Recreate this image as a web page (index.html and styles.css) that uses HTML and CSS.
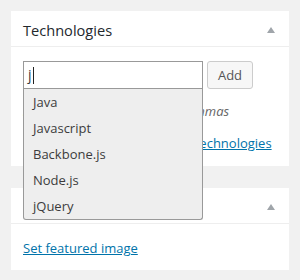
FILE: index.html
```html
<!DOCTYPE html>
<html>
<head>
<meta charset="utf-8">
<link rel="stylesheet" href="styles.css">
</head>
<body>
<div class="page">
  <div class="panel">
    <div class="panel-head">
      <h2 class="panel-title">Technologies</h2>
      <span class="toggle"></span>
    </div>
    <div class="panel-body tags-body">
      <div class="add-row">
        <div class="field">
          <div class="tag-input">j<span class="caret"></span></div>
          <ul class="suggest">
            <li>Java</li>
            <li>Javascript</li>
            <li>Backbone.js</li>
            <li>Node.js</li>
            <li>jQuery</li>
          </ul>
        </div>
        <button class="btn">Add</button>
      </div>
      <p class="howto">Separate technologies with commas</p>
      <p class="choose"><a href="#">Choose from the most used technologies</a></p>
    </div>
  </div>
  <div class="panel">
    <div class="panel-head">
      <h2 class="panel-title"></h2>
      <span class="toggle"></span>
    </div>
    <div class="panel-body image-body">
      <a href="#">Set featured image</a>
    </div>
  </div>
</div>
</body>
</html>
```
FILE: styles.css
```css
html, body {
  margin: 0;
  padding: 0;
  background: #f1f1f1;
  font-family: "Open Sans", "Liberation Sans", sans-serif;
  font-size: 13px;
  color: #444;
}
.page {
  padding: 11px;
  display: flex;
  flex-direction: column;
  gap: 22px;
}
.panel {
  background: #fff;
  width: 278px;
}
.panel-head {
  height: 35px;
  border-bottom: 1px solid #eee;
  display: flex;
  align-items: center;
  justify-content: space-between;
  padding: 0 14px 0 12px;
}
.panel-title {
  margin: 2px 0 0 0;
  font-size: 14.6px;
  font-weight: 400;
  color: #23282d;
}
.toggle {
  width: 0;
  height: 0;
  border-left: 4px solid transparent;
  border-right: 4px solid transparent;
  border-bottom: 6px solid #a0a5aa;
  margin-top: 2px;
}
.tags-body {
  padding: 14px 12px 0 12px;
  height: 105px;
}
.add-row {
  display: flex;
  gap: 4px;
}
.field {
  position: relative;
}
.tag-input {
  box-sizing: border-box;
  width: 180px;
  height: 28px;
  border: 1px solid #999;
  padding: 0 4px;
  font-size: 14px;
  line-height: 26px;
  color: #32373c;
  display: flex;
  align-items: center;
}
.caret {
  display: inline-block;
  width: 1px;
  height: 17px;
  background: #222;
  margin-left: 1px;
}
.suggest {
  position: absolute;
  top: 28px;
  left: 0;
  width: 180px;
  box-sizing: border-box;
  margin: 0;
  padding: 0;
  list-style: none;
  background: #eee;
  border: 1px solid #999;
  border-top: none;
  border-radius: 0 0 3px 3px;
  z-index: 2;
}
.suggest li {
  height: 26px;
  line-height: 27px;
  padding-left: 9px;
  font-size: 13px;
  color: #3c3c3c;
}
.btn {
  box-sizing: border-box;
  width: 46px;
  height: 28px;
  border: 1px solid #ccc;
  border-radius: 3px;
  background: #f7f7f7;
  font-family: "Open Sans", "Liberation Sans", sans-serif;
  font-size: 13px;
  color: #555;
  padding: 0;
}
.howto {
  margin: 12px 0 0 0;
  font-style: italic;
  color: #666;
  line-height: 20px;
}
.choose {
  margin: 12px 0 0 0;
  line-height: 20px;
}
a {
  color: #0073aa;
  text-decoration: underline;
}
.image-body {
  padding: 14px 12px 0 12px;
  height: 32px;
  line-height: 20px;
}
```
